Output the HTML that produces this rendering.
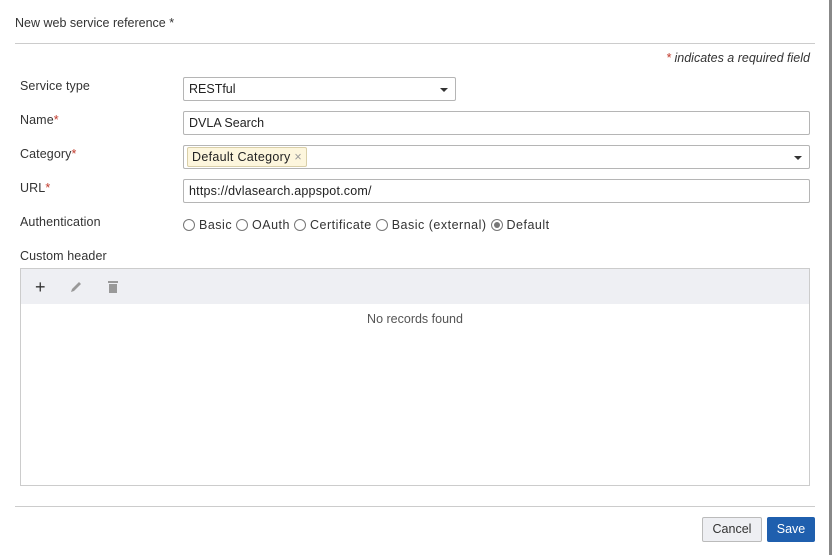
<!DOCTYPE html>
<html><head><style>
*{box-sizing:border-box;margin:0;padding:0}
body{width:832px;height:555px;background:#fff;font-family:"Liberation Sans",sans-serif;font-size:12px;color:#333;position:relative;overflow:hidden}
.a{position:absolute}
.inp{position:absolute;border:1px solid #b5b5b5;border-radius:2px;background:#fff;padding-left:5px;line-height:23px;font-size:12.5px;color:#222}
.lbl{position:absolute;left:20px;font-size:12.5px;letter-spacing:0.1px}
.req{color:#c0392b}
.arrow{position:absolute;right:7px;top:10px;width:0;height:0;border-left:4px solid transparent;border-right:4px solid transparent;border-top:4px solid #333}
.rad{display:inline-block;width:12px;height:12px;border:1px solid #777;border-radius:50%;vertical-align:-2px;margin-right:4px;background:#fff;position:relative}
</style></head><body>
<div class="a" style="right:0;top:0;width:3px;height:555px;background:#888"></div>
<div class="a" style="left:15px;top:16px;font-size:12.5px">New web service reference *</div>
<div class="a" style="left:15px;top:43px;width:800px;height:1px;background:#ccc"></div>
<div class="a" style="right:22px;top:51px;font-style:italic;font-size:12.5px"><span class="req">*</span> indicates a required field</div>

<div class="lbl" style="top:79px">Service type</div>
<div class="inp" style="left:183px;top:77px;width:273px;height:24px">RESTful<div class="arrow"></div></div>
<div class="lbl" style="top:113px">Name<span class="req">*</span></div>
<div class="inp" style="left:183px;top:111px;width:627px;height:24px">DVLA Search</div>
<div class="lbl" style="top:147px">Category<span class="req">*</span></div>
<div class="inp" style="left:183px;top:145px;width:627px;height:24px;padding-left:3px;line-height:21px"><span style="display:inline-block;background:#fdf6dd;border:1px solid #d9cfa8;border-radius:2px;line-height:18px;padding:0 4px;margin-top:1px;letter-spacing:0.3px">Default Category <span style="color:#999">×</span></span><div class="arrow"></div></div>
<div class="lbl" style="top:181px">URL<span class="req">*</span></div>
<div class="inp" style="left:183px;top:179px;width:627px;height:24px;letter-spacing:0.2px">https://dvlasearch.appspot.com/</div>
<div class="lbl" style="top:215px">Authentication</div>
<div class="a" style="left:183px;top:218px;font-size:12.5px;white-space:nowrap;letter-spacing:0.5px"><span class="rad"></span>Basic <span class="rad"></span>OAuth <span class="rad"></span>Certificate <span class="rad"></span>Basic (external) <span class="rad"><span style="position:absolute;left:2px;top:2px;width:6px;height:6px;border-radius:50%;background:#777"></span></span>Default</div>
<div class="lbl" style="top:249px">Custom header</div>
<div class="a" style="left:20px;top:268px;width:790px;height:218px;border:1px solid #ccc"></div>
<div class="a" style="left:21px;top:269px;width:788px;height:35px;background:#eeeff3"></div>
<div class="a" style="left:35px;top:277px;font-size:18px;color:#333">+</div>
<svg class="a" style="left:69px;top:280px" width="14" height="14" viewBox="0 0 14 14"><path d="M2 12 L3 9 L10 2 L12 4 L5 11 Z" fill="#999"/></svg>
<svg class="a" style="left:107px;top:280px" width="12" height="14" viewBox="0 0 12 14"><rect x="1" y="1" width="10" height="2" fill="#999"/><rect x="2" y="4" width="8" height="9" fill="#999"/></svg>
<div class="a" style="left:20px;width:790px;top:312px;text-align:center;font-size:12.5px;color:#555">No records found</div>
<div class="a" style="left:15px;top:506px;width:800px;height:1px;background:#ccc"></div>
<div class="a" style="left:702px;top:517px;width:60px;height:25px;border:1px solid #bbb;border-radius:2px;background:#eeeff3;text-align:center;line-height:23px;font-size:12.5px">Cancel</div>
<div class="a" style="left:767px;top:517px;width:48px;height:25px;border-radius:2px;background:#1f5fae;color:#fff;text-align:center;line-height:25px;font-size:12.5px">Save</div>
</body></html>
